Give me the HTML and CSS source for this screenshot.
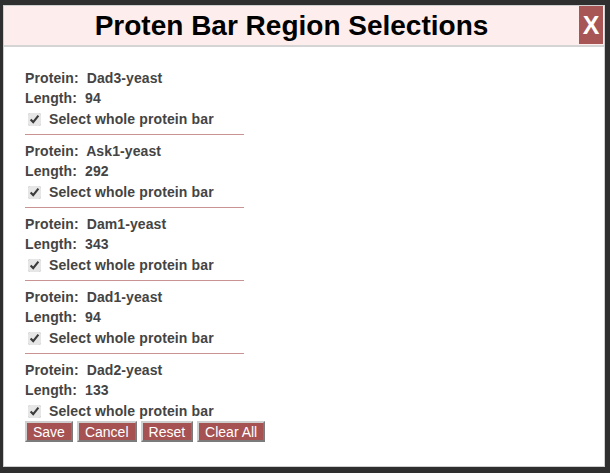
FILE: index.html
```html
<!DOCTYPE html>
<html>
<head>
<meta charset="utf-8">
<link rel="stylesheet" href="styles.css">
</head>
<body>
<div class="dialog">
  <div class="header">
    <div class="title">Proten Bar Region Selections</div>
    <div class="close">X</div>
  </div>
  <div class="content">
    <div class="group">
      <div class="line">Protein:&nbsp; Dad3-yeast</div>
      <div class="line">Length:&nbsp; 94</div>
      <label class="check"><input type="checkbox" checked> Select whole protein bar</label>
    </div>
    <div class="group">
      <div class="line">Protein:&nbsp; Ask1-yeast</div>
      <div class="line">Length:&nbsp; 292</div>
      <label class="check"><input type="checkbox" checked> Select whole protein bar</label>
    </div>
    <div class="group">
      <div class="line">Protein:&nbsp; Dam1-yeast</div>
      <div class="line">Length:&nbsp; 343</div>
      <label class="check"><input type="checkbox" checked> Select whole protein bar</label>
    </div>
    <div class="group">
      <div class="line">Protein:&nbsp; Dad1-yeast</div>
      <div class="line">Length:&nbsp; 94</div>
      <label class="check"><input type="checkbox" checked> Select whole protein bar</label>
    </div>
    <div class="group last">
      <div class="line">Protein:&nbsp; Dad2-yeast</div>
      <div class="line">Length:&nbsp; 133</div>
      <label class="check"><input type="checkbox" checked> Select whole protein bar</label>
    </div>
    <div class="buttons">
      <button class="btn">Save</button>
      <button class="btn">Cancel</button>
      <button class="btn">Reset</button>
      <button class="btn">Clear All</button>
    </div>
  </div>
</div>
</body>
</html>
```
FILE: styles.css
```css
html, body {
  margin: 0;
  padding: 0;
  background: #2f2f2f;
  font-family: "Liberation Sans", Arial, sans-serif;
}
body {
  padding: 5px 5px 6px 3px;
  height: 473px;
  box-sizing: border-box;
}
.dialog {
  width: 602px;
  height: 462px;
  box-sizing: border-box;
  background: #fff;
  border: 1px solid #cfcfcf;
  display: flex;
  flex-direction: column;
}
.header {
  display: flex;
  align-items: stretch;
  background: #fdeeed;
  border-bottom: 2px solid #d4d4d4;
  height: 41px;
  box-sizing: border-box;
  padding: 0 1px 1px 0;
}
.title {
  flex: 1;
  text-align: center;
  font-weight: bold;
  font-size: 28px;
  line-height: 39px;
  color: #000;
}
.close {
  width: 24px;
  background: #a85555;
  color: #fff;
  font-weight: bold;
  font-size: 25px;
  line-height: 39px;
  text-align: center;
}
.content {
  padding: 21px 21px 0 21px;
}
.group {
  width: 219px;
  border-bottom: 1px solid #c99393;
  padding-bottom: 5px;
  margin-bottom: 6px;
}
.group.last {
  border-bottom: none;
  margin-bottom: 0;
  padding-bottom: 0;
}
.line {
  font-weight: bold;
  font-size: 14px;
  line-height: 20px;
  color: #444;
  letter-spacing: 0.1px;
}
.check {
  display: flex;
  align-items: center;
  font-weight: bold;
  font-size: 14px;
  line-height: 20px;
  color: #444;
  gap: 8px;
  margin-top: 1px;
  letter-spacing: 0.12px;
}
.check input {
  margin: 0 0 0 3px;
  width: 13px;
  height: 13px;
  accent-color: #e6e6e6;
}
.buttons {
  display: flex;
  gap: 4px;
  margin-top: 0;
}
.btn {
  background: #a65252;
  color: #fff;
  font-family: "Liberation Sans", Arial, sans-serif;
  font-size: 14px;
  line-height: 16px;
  padding: 0 6px;
  height: 21px;
  border: 2px outset #cfcfcf;
  border-radius: 0;
}
```
